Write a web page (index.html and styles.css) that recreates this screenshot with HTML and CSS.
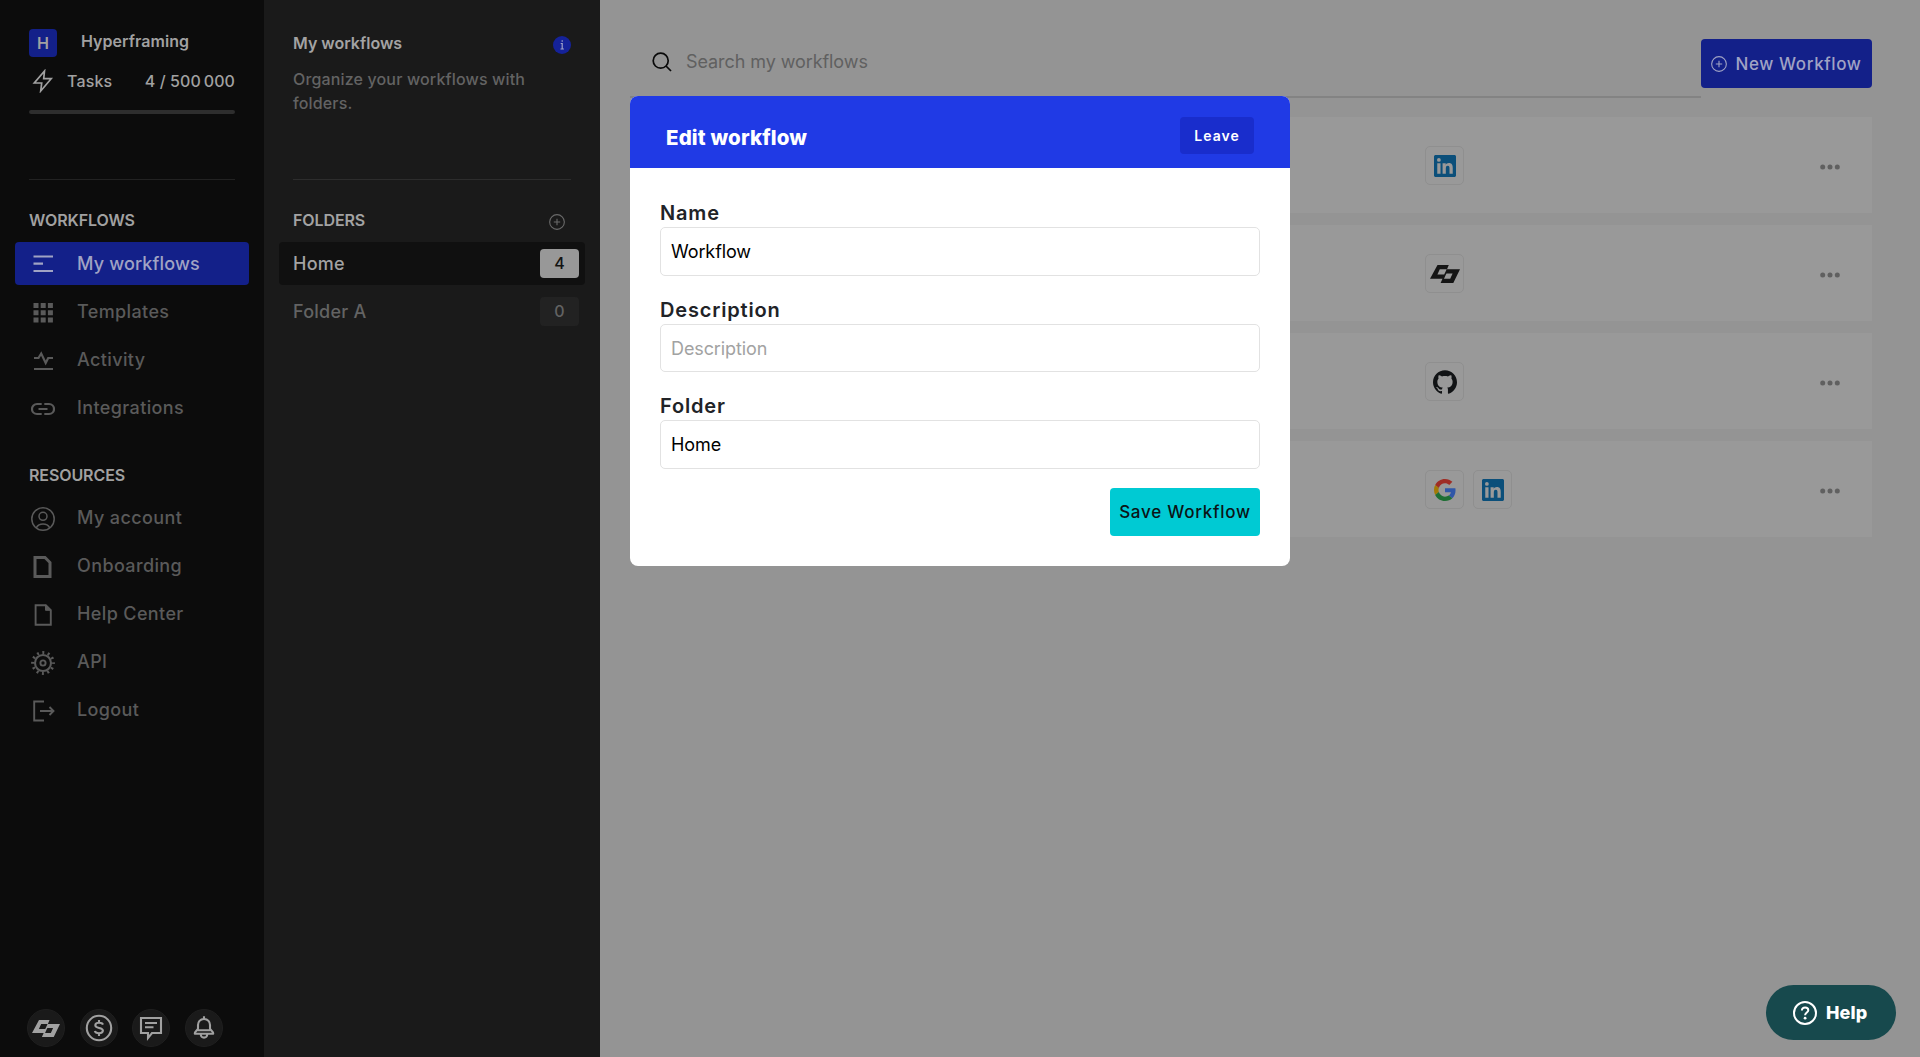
FILE: index.html
```html
<!DOCTYPE html>
<html lang="en">
<head>
<meta charset="utf-8">
<title>My workflows</title>
<link rel="stylesheet" href="styles.css">
</head>
<body>
<svg class="defs" width="0" height="0" aria-hidden="true">
  <symbol id="brand" viewBox="0 0 30 18"><path fill-rule="evenodd" d="M7.500 0H18.800L17 4.200H30L23.300 18H10.600L12.500 13.700H0ZM9.800 4.200 7.400 9.600H14.200L16.700 4.200ZM15.900 9.600 14 13.700H20.200L22.600 8.400H16.500Z"/></symbol>
  <symbol id="linkedin" viewBox="0 0 24 24"><path d="M20.447 20.452h-3.554v-5.569c0-1.328-.027-3.037-1.852-3.037-1.853 0-2.136 1.445-2.136 2.939v5.667H9.351V9h3.414v1.561h.046c.477-.9 1.637-1.850 3.370-1.850 3.601 0 4.267 2.370 4.267 5.455v6.286zM5.337 7.433a2.062 2.062 0 1 1 0-4.125 2.062 2.062 0 0 1 0 4.125zM7.119 20.452H3.555V9h3.564v11.452zM22.225 0H1.771C.792 0 0 .774 0 1.729v20.542C0 23.227.792 24 1.771 24h20.451C23.200 24 24 23.227 24 22.271V1.729C24 .774 23.200 0 22.222 0h.003z"/></symbol>
  <symbol id="plus" viewBox="0 0 16 16"><g fill="none" stroke="currentColor" stroke-width="1.100"><circle cx="8" cy="8" r="7.350"/><path d="M8 4.800v6.400M4.800 8h6.400"/></g></symbol>
  <symbol id="dots" viewBox="0 0 20 6"><circle cx="2.700" cy="3" r="2.500"/><circle cx="10" cy="3" r="2.500"/><circle cx="17.300" cy="3" r="2.500"/></symbol>
</svg>
<div class="app">
  <aside class="sidebar">
    <div class="account"><span class="avatar">H</span><span class="account-name">Hyperframing</span></div>
    <div class="tasks">
      <svg width="24" height="24" viewBox="0 0 24 24" fill="none" stroke="currentColor" stroke-width="1.700"><path d="M13.500 2 3.300 14h7.400L9.700 22 20.200 9.700h-7.500z"/></svg>
      <span class="tasks-label">Tasks</span><span class="tasks-count">4 / 500&#8201;000</span>
    </div>
    <div class="meter"></div>
    <div class="divider"></div>
    <h2 class="nav-title">WORKFLOWS</h2>
    <nav class="nav">
      <a class="nav-item active"><svg class="nav-icon" viewBox="0 0 24 24" fill="none" stroke="currentColor" stroke-width="2.200"><path d="M2.500 3.500h19.500M2.500 10.700h9.500M2.500 18h19.500"/></svg><span>My workflows</span></a>
      <a class="nav-item"><svg class="nav-icon" viewBox="0 0 24 24" fill="currentColor"><path d="M2.500 2h5v5h-5zM9.700 2h5v5h-5zM16.900 2h5v5h-5zM2.500 9.200h5v5h-5zM9.700 9.200h5v5h-5zM16.900 9.200h5v5h-5zM2.500 16.500h5v5h-5zM9.700 16.500h5v5h-5zM16.900 16.500h5v5h-5z"/></svg><span>Templates</span></a>
      <a class="nav-item"><svg class="nav-icon" viewBox="0 0 24 24" fill="none" stroke="currentColor" stroke-width="2.200"><path d="M3 9h4.500l2.700-4.500 4.500 9.500 2.500-5H22M3 20h19"/></svg><span>Activity</span></a>
      <a class="nav-item"><svg class="nav-icon" viewBox="0 0 24 24" fill="none" stroke="currentColor" stroke-width="2.200"><path d="M10.700 7H6a5 5 0 0 0 0 10h4.700M13.300 7H18a5 5 0 0 1 0 10h-4.700M7.500 12h9"/></svg><span>Integrations</span></a>
    </nav>
    <h2 class="nav-title resources">RESOURCES</h2>
    <nav class="nav">
      <a class="nav-item"><svg class="nav-icon" viewBox="0 0 24 24" fill="none" stroke="currentColor" stroke-width="1.500"><circle cx="12" cy="12" r="11.200"/><circle cx="12" cy="9.300" r="4"/><path d="M5.200 20.800Q7.400 17 12 17t6.800 3.800"/></svg><span>My account</span></a>
      <a class="nav-item"><svg class="nav-icon" viewBox="0 0 24 24" fill="none" stroke="currentColor" stroke-width="3"><path d="M4 2.500h10l5 5v14.100h-15z"/></svg><span>Onboarding</span></a>
      <a class="nav-item"><svg class="nav-icon" viewBox="0 0 24 24" fill="none" stroke="currentColor" stroke-width="1.900"><path d="M4.600 2.200h10.200l5 5v14.600H4.600z"/><path d="M14.500 2.200v5.100h5.300z" fill="currentColor" stroke-width="1"/></svg><span>Help Center</span></a>
      <a class="nav-item"><svg class="nav-icon" viewBox="0 0 24 24" fill="none" stroke="currentColor"><circle cx="12" cy="12" r="8" stroke-width="2.100"/><circle cx="12" cy="12" r="2.600" stroke-width="1.900"/><circle cx="12" cy="12" r="10.400" stroke-width="3" stroke-dasharray="2 3.445" stroke-dashoffset="1"/></svg><span>API</span></a>
      <a class="nav-item"><svg class="nav-icon" viewBox="0 0 24 24" fill="none" stroke="currentColor" stroke-width="1.900"><path d="M13 2.500H3.200v19H13M9 12h13.500M18.500 8l4 4-4 4"/></svg><span>Logout</span></a>
    </nav>
    <div class="shortcuts">
      <span class="round"><svg width="28" height="17" fill="currentColor"><use href="#brand"/></svg></span>
      <span class="round"><svg width="28" height="28" viewBox="0 0 28 28" fill="none" stroke="currentColor" stroke-width="2.100"><circle cx="14" cy="14" r="12.200"/><path d="M18 10.600c-.6-1.300-2-1.800-4-1.800-2.200 0-3.700.8-3.700 2.500 0 3.600 7.600 1.700 7.600 5.300 0 1.800-1.600 2.600-3.900 2.600s-3.800-.8-4.200-2.200M14 6v2.800M14 19.200V22"/></svg></span>
      <span class="round"><svg width="24" height="26" viewBox="0 0 24 26" fill="none" stroke="currentColor" stroke-width="2.100"><path d="M2 3h20v15h-9l-4 5v-5H2zM6 8h12M6 12.300h8.500"/></svg></span>
      <span class="round"><svg width="24" height="26" viewBox="0 0 24 26" fill="none" stroke="currentColor" stroke-width="2.100" stroke-linejoin="round"><path d="M12 4c-4 0-6 3-6 6v3.500c0 1.500-3.200 2.500-3.200 5.300h18.400c0-2.800-3.200-3.800-3.200-5.300V10c0-3-2-6-6-6zM12 1.200V4M5.500 15.200h13M8.700 19.500c.5 4.200 6.100 4.200 6.600 0"/></svg></span>
    </div>
  </aside>

  <section class="folders">
    <header class="folders-head">
      <div class="folders-row"><h1 class="folders-title">My workflows</h1><svg class="info" width="18" height="18" viewBox="0 0 18 18"><circle cx="9" cy="9" r="9" fill="#152299"/><path d="M7.700 7.500h1.500v5.200M7.500 13h3.400M9.200 4.300v1.500" fill="none" stroke="#a1a4c9" stroke-width="1.200"/></svg></div>
      <p class="folders-text">Organize your workflows with folders.</p>
    </header>
    <div class="folders-label"><h2 class="nav-title">FOLDERS</h2><svg width="16" height="16"><use href="#plus"/></svg></div>
    <div class="folder-list">
      <a class="folder selected"><span>Home</span><span class="count">4</span></a>
      <a class="folder"><span>Folder A</span><span class="count">0</span></a>
    </div>
  </section>

  <main class="main">
    <div class="toolbar">
      <label class="search"><svg width="20" height="20" viewBox="0 0 20 20" fill="none" stroke="#0a0a0a" stroke-width="1.700"><circle cx="8.700" cy="8.700" r="7.500"/><path d="m14 14 5 5"/></svg><span>Search my workflows</span></label>
      <button class="new-button"><svg width="16" height="16"><use href="#plus"/></svg><span>New Workflow</span></button>
    </div>
    <div class="rows">
      <article class="row"><div class="apps"><span class="tile"><svg width="22" height="22" fill="#0b4f7a"><use href="#linkedin"/></svg></span></div><svg class="menu" width="20" height="6"><use href="#dots"/></svg></article>
      <article class="row"><div class="apps"><span class="tile"><svg width="30" height="18" fill="#151515"><use href="#brand"/></svg></span></div><svg class="menu" width="20" height="6"><use href="#dots"/></svg></article>
      <article class="row"><div class="apps"><span class="tile"><svg width="24" height="24" viewBox="0 0 24 24" fill="#111315"><path d="M12 .297c-6.630 0-12 5.373-12 12 0 5.303 3.438 9.800 8.205 11.385.6.113.82-.258.82-.577 0-.285-.01-1.040-.015-2.040-3.338.724-4.042-1.610-4.042-1.610C4.422 18.070 3.633 17.700 3.633 17.700c-1.087-.744.084-.729.084-.729 1.205.084 1.838 1.236 1.838 1.236 1.070 1.835 2.809 1.305 3.495.998.108-.776.417-1.305.76-1.605-2.665-.3-5.466-1.332-5.466-5.930 0-1.310.465-2.380 1.235-3.220-.135-.303-.54-1.523.105-3.176 0 0 1.005-.322 3.300 1.230.96-.267 1.980-.399 3-.405 1.020.006 2.040.138 3 .405 2.280-1.552 3.285-1.230 3.285-1.230.645 1.653.24 2.873.12 3.176.765.840 1.230 1.910 1.230 3.220 0 4.610-2.805 5.625-5.475 5.920.42.360.81 1.096.81 2.220 0 1.606-.015 2.896-.015 3.286 0 .315.210.690.825.570C20.565 22.092 24 17.592 24 12.297c0-6.627-5.373-12-12-12"/></svg></span></div><svg class="menu" width="20" height="6"><use href="#dots"/></svg></article>
      <article class="row"><div class="apps"><span class="tile"><svg width="22" height="22" viewBox="0 0 48 48"><path fill="#9f2d25" d="M24 9.500c3.540 0 6.710 1.220 9.210 3.600l6.850-6.850C35.900 2.380 30.470 0 24 0 14.620 0 6.510 5.380 2.560 13.220l7.980 6.190C12.430 13.720 17.740 9.500 24 9.500z"/><path fill="#3057a8" d="M46.980 24.550c0-1.570-.15-3.090-.38-4.550H24v9.020h12.940c-.58 2.960-2.260 5.480-4.780 7.180l7.730 6c4.510-4.180 7.090-10.360 7.090-17.650z"/><path fill="#a37a06" d="M10.530 28.590c-.48-1.450-.76-2.990-.76-4.590s.27-3.140.76-4.590l-7.980-6.190C.92 16.460 0 20.120 0 24s.92 7.540 2.560 10.780l7.970-6.190z"/><path fill="#1e6f34" d="M24 48c6.480 0 11.930-2.130 15.890-5.810l-7.730-6c-2.150 1.450-4.920 2.300-8.160 2.300-6.260 0-11.570-4.220-13.470-9.910l-7.980 6.190C6.510 42.620 14.620 48 24 48z"/></svg></span><span class="tile"><svg width="22" height="22" fill="#0b4f7a"><use href="#linkedin"/></svg></span></div><svg class="menu" width="20" height="6"><use href="#dots"/></svg></article>
    </div>
  </main>
</div>

<div class="modal" role="dialog">
  <header class="modal-head"><h2 class="modal-title">Edit workflow</h2><button class="leave">Leave</button></header>
  <form class="modal-body">
    <label class="field"><span class="field-label">Name</span><span class="input">Workflow</span></label>
    <label class="field"><span class="field-label">Description</span><span class="input placeholder">Description</span></label>
    <label class="field"><span class="field-label">Folder</span><span class="input">Home</span></label>
    <button class="save" type="button">Save Workflow</button>
  </form>
</div>

<button class="help"><svg width="24" height="24" viewBox="0 0 24 24" fill="none" stroke="#fff" stroke-width="2"><circle cx="12" cy="12" r="11"/><path d="M8.900 9.600c0-1.900 1.300-3.100 3.200-3.100s3.200 1.100 3.200 2.700c0 2.300-3.200 2.500-3.200 5.100"/><circle cx="12.100" cy="17.200" r="1.400" fill="#fff" stroke="none"/></svg><span>Help</span></button>
</body>
</html>
```
FILE: styles.css
```css
* { box-sizing: border-box; }

body {
  margin: 0;
  font-family: Inter, "Liberation Sans", sans-serif;
  font-size: 18px;
  line-height: 24px;
  background: #949494;
  overflow: hidden;
}

h1, h2, p { margin: 0; }
button { border: 0; font: inherit; padding: 0; }
svg { flex: none; display: block; }
.defs { position: absolute; }

.app { display: flex; height: 1057px; }

/* Sidebar */
.sidebar {
  width: 264px;
  flex: none;
  display: flex;
  flex-direction: column;
  padding: 29px 15px 10px;
  background: #0c0c0c;
  color: #a1a1a1;
}
.account { display: flex; align-items: center; padding-left: 14px; height: 28px; }
.avatar {
  width: 28px;
  height: 28px;
  border-radius: 4px;
  background: #132089;
  font-size: 16px;
  line-height: 29px;
  font-weight: 600;
  text-align: center;
}
.account-name { margin: -4px 0 0 24px; font-size: 16px; font-weight: 600; letter-spacing: .05px; }
.tasks {
  display: flex;
  align-items: center;
  height: 24px;
  margin: 12px 14px 0 16px;
  font-size: 16px;
  font-weight: 500;
}
.tasks-label { margin-left: 12px; letter-spacing: .15px; }
.tasks-count { margin-left: auto; letter-spacing: .08px; white-space: pre; }
.meter { height: 4px; margin: 17px 14px 0; border-radius: 2px; background: #2e2e2e; }
.divider { height: 1px; margin: 65px 14px 0; background: #222; }
.nav-title { font-size: 16px; font-weight: 600; line-height: 24px; letter-spacing: -.1px; }
.sidebar .nav-title { margin: 28px 0 10px 14px; }
.sidebar .nav-title.resources { margin-top: 34px; margin-bottom: 9px; }
.nav { display: flex; flex-direction: column; gap: 5px; }
.nav-item {
  display: flex;
  align-items: center;
  gap: 22px;
  height: 43px;
  padding-left: 16px;
  border-radius: 4px;
  color: #5a5a5a;
  font-weight: 500;
  letter-spacing: .38px;
}
.nav-item.active { background: #132089; color: #a0a3c4; letter-spacing: .15px; }
.nav-icon { width: 24px; height: 24px; margin-top: 2px; }
.shortcuts { display: flex; gap: 14.700px; margin: auto 0 0 12px; }
.round {
  display: grid;
  place-items: center;
  width: 38px;
  height: 38px;
  border: 1px solid #1f1f1f;
  border-radius: 50%;
  background: #1a1a1a;
}

/* Folder panel */
.folders { width: 336px; flex: none; padding: 31px 15px 0; background: #1a1a1a; color: #a3a3a3; }
.folders-head { height: 149px; margin: 0 14px; border-bottom: 1px solid #2d2d2d; }
.folders-row { display: flex; justify-content: space-between; }
.folders-title { font-size: 16px; font-weight: 600; line-height: 24px; }
.info { margin: 5px 0 0; }
.folders-text {
  margin-top: 12px;
  font-size: 16px;
  font-weight: 500;
  letter-spacing: .15px;
  color: #636363;
}
.folders-label {
  display: flex;
  justify-content: space-between;
  align-items: center;
  height: 24px;
  margin: 28px 20px 10px 14px;
}
.folders-label svg { color: #6a6a6a; margin-top: 4px; }
.folder-list { display: flex; flex-direction: column; gap: 5px; }
.folder {
  display: flex;
  align-items: center;
  justify-content: space-between;
  height: 43px;
  padding: 0 6px 0 14px;
  border-radius: 4px;
  color: #636363;
  font-weight: 500;
  letter-spacing: .25px;
}
.folder.selected { background: #101010; color: #a3a3a3; }
.count {
  width: 39px;
  height: 29px;
  border-radius: 4px;
  background: #222;
  font-size: 16px;
  line-height: 29px;
  text-align: center;
}
.selected .count { background: #989898; color: #131313; }

/* Workflow list */
.main { flex: 1; padding: 39px 48px 0 30px; }
.toolbar { display: flex; align-items: flex-start; height: 59px; }
.search {
  display: flex;
  align-items: center;
  gap: 14px;
  flex: 1;
  height: 59px;
  padding: 0 0 11px 22px;
  border-bottom: 2px solid #838383;
  color: #606060;
  letter-spacing: -.08px;
}
.new-button {
  display: flex;
  align-items: center;
  justify-content: center;
  gap: 8px;
  width: 171px;
  height: 49px;
  border-radius: 4px;
  background: #132089;
  color: #a0a3c4;
  font-size: 17px;
  font-weight: 500;
  letter-spacing: .6px;
}
.rows { display: flex; flex-direction: column; gap: 12px; margin-top: 19px; }
.row {
  display: flex;
  justify-content: space-between;
  align-items: center;
  height: 96px;
  padding: 0 32px 0 795px;
  background: #999;
}
.apps { display: flex; gap: 9px; margin-top: 1px; }
.tile {
  display: grid;
  place-items: center;
  width: 39px;
  height: 39px;
  border: 1px solid #8f8f8f;
  border-radius: 5px;
}
.menu { margin-top: 3px; fill: #606060; }

/* Edit dialog */
.modal {
  position: absolute;
  left: 630px;
  top: 96px;
  width: 660px;
  height: 470px;
  border-radius: 8px;
  background: #fff;
  overflow: hidden;
}
.modal-head {
  display: flex;
  align-items: center;
  justify-content: space-between;
  height: 72px;
  padding: 7px 36px 0;
  background: #203ae5;
  color: #fff;
}
.modal-title { margin-top: 5px; font-size: 20.500px; font-weight: 800; letter-spacing: .15px; }
.leave {
  width: 74px;
  height: 37px;
  border-radius: 4px;
  background: #192dcc;
  color: #fff;
  font-size: 14px;
  font-weight: 600;
  letter-spacing: 1px;
}
.modal-body { display: flex; flex-direction: column; padding: 32px 30px 30px; }
.field { display: flex; flex-direction: column; margin-bottom: 21px; }
.field-label { height: 27px; font-size: 20px; font-weight: 600; line-height: 26px; letter-spacing: .82px; color: #212327; }
.input {
  height: 48.500px;
  padding: 0 10px;
  border: 1px solid #e2e2e2;
  border-radius: 5px;
  color: #000;
  line-height: 48px;
  letter-spacing: -.1px;
}
.input.placeholder { color: #a2a2a2; }
.save {
  align-self: flex-end;
  width: 150px;
  height: 48px;
  margin-top: -2px;
  border-radius: 4px;
  background: #00cad3;
  color: #0b1416;
  font-size: 17px;
  font-weight: 500;
  letter-spacing: .75px;
}

/* Support launcher */
.help {
  position: absolute;
  left: 1766px;
  top: 985px;
  display: flex;
  align-items: center;
  gap: 9px;
  width: 130px;
  height: 55px;
  padding-left: 27px;
  border-radius: 28px;
  background: #17494d;
  color: #fff;
  font-weight: 800;
  letter-spacing: .1px;
}
```
